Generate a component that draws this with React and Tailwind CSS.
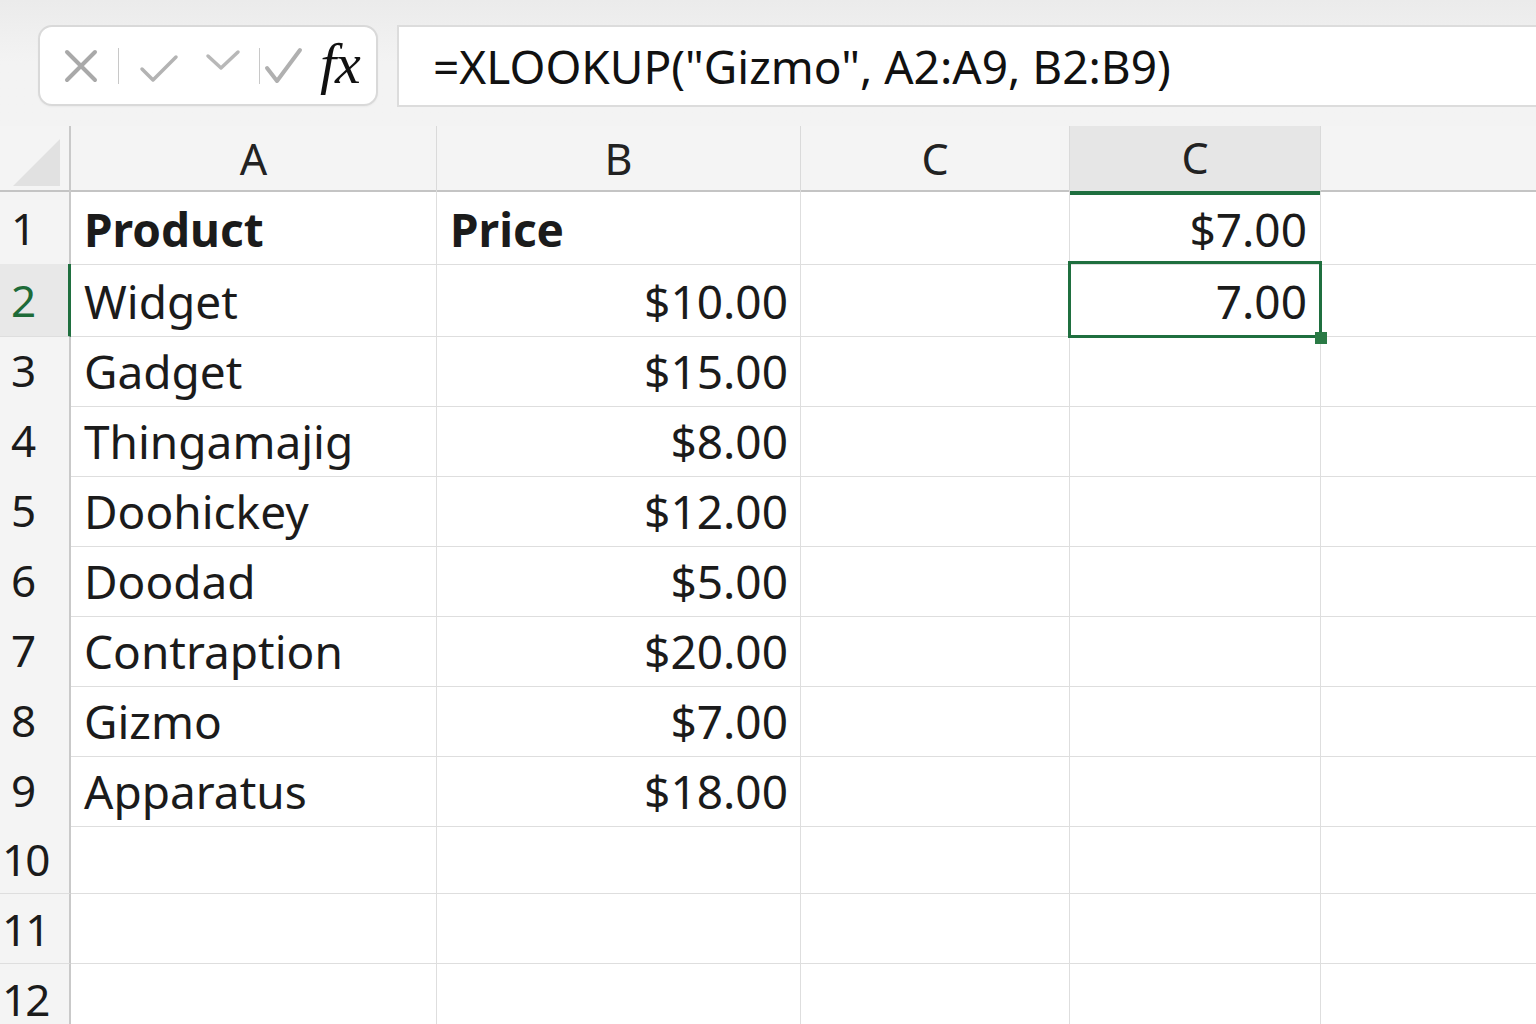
import React from 'react';

const rows = [
  { a: 'Product', b: 'Price', d: '$7.00', bold: true },
  { a: 'Widget', b: '$10.00', d: '7.00' },
  { a: 'Gadget', b: '$15.00' },
  { a: 'Thingamajig', b: '$8.00' },
  { a: 'Doohickey', b: '$12.00' },
  { a: 'Doodad', b: '$5.00' },
  { a: 'Contraption', b: '$20.00' },
  { a: 'Gizmo', b: '$7.00' },
  { a: 'Apparatus', b: '$18.00' },
  {},
  {},
  {},
];

const cols = 'grid grid-cols-[71px_366px_364px_269px_251px_1fr]';

const FormulaIcons = () => (
  <div className="w-[340px] h-[81px] rounded-[14px] border-2 border-[#d9d9d9] bg-white flex items-center pl-[24px] shadow-[0_1px_2px_rgba(0,0,0,0.04)]">
    <svg width="34" height="34" viewBox="0 0 34 34" className="text-[#a9a9a9]">
      <path d="M3 3 L31 31 M31 3 L3 31" stroke="currentColor" strokeWidth="4" strokeLinecap="round" />
    </svg>
    <div className="w-px h-[36px] bg-[#c8c8c8] ml-[20px]" />
    <svg width="40" height="32" viewBox="0 0 40 32" className="ml-[20px] mt-[4px] text-[#b3b3b3]">
      <path d="M3 17 L14 28 L37 5" stroke="currentColor" strokeWidth="3.5" fill="none" strokeLinecap="round" strokeLinejoin="round" />
    </svg>
    <svg width="36" height="26" viewBox="0 0 36 26" className="ml-[26px] mb-[10px] text-[#b8b8b8]">
      <path d="M3 8 L16 20 L33 4" stroke="currentColor" strokeWidth="3.5" fill="none" strokeLinecap="round" strokeLinejoin="round" />
    </svg>
    <div className="w-px h-[36px] bg-[#c8c8c8] ml-[18px]" />
    <svg width="40" height="40" viewBox="0 0 40 40" className="ml-[4px] text-[#b0b0b0]">
      <path d="M3 22 L13 35 L36 4" stroke="currentColor" strokeWidth="4" fill="none" strokeLinecap="round" strokeLinejoin="round" />
    </svg>
    <span className="ml-[16px] text-[58px] leading-none italic text-[#111] font-['Liberation_Serif',serif] -mt-[4px] tracking-[-1px]">fx</span>
  </div>
);

export default function App() {
  return (
    <div className="w-[1536px] h-[1024px] overflow-hidden bg-white font-['Noto_Sans',sans-serif] text-[#1b1b1b]">
      {/* formula bar */}
      <div className="h-[126px] bg-gradient-to-b from-[#ebebeb] via-[#f3f3f3] to-[#f3f3f3] flex pt-[25px] pl-[38px] gap-[19px]">
        <FormulaIcons />
        <div className="flex-1 h-[82px] bg-white border-2 border-r-0 border-[#dcdcdc] flex items-center pl-[34px]">
          <span className="text-[46px] leading-none text-[#111]">=XLOOKUP("Gizmo", A2:A9, B2:B9)</span>
        </div>
      </div>

      {/* column headers */}
      <div className={`${cols} h-[66px] bg-[#f4f4f4] border-b-2 border-[#c4c4c4]`}>
        <div className="border-r-2 border-[#c9c9c9] flex items-end justify-end pr-[9px] pb-[7px]">
          <div className="w-0 h-0 border-l-[47px] border-l-transparent border-b-[47px] border-b-[#e1e1e1]" />
        </div>
        {['A', 'B', 'C'].map((c) => (
          <div key={c} className="border-r border-[#dadada] flex items-center justify-center text-[43px] text-[#222]">{c}</div>
        ))}
        <div className="bg-[#e6e6e6] border-r border-[#dadada] border-b-[4px] border-b-[#1f6f3f] -mb-[2px] flex items-center justify-center text-[43px] text-[#222]">C</div>
        <div />
      </div>

      {/* rows */}
      {rows.map((r, i) => {
        const sel = i === 1;
        return (
          <div key={i} className={`${cols} ${i === 0 ? 'h-[72px]' : 'h-[70px]'} ${sel ? 'relative z-10' : ''}`}>
            <div className={`${sel ? 'bg-[#e8e8e8] text-[#1e6b38] border-r-[3px] border-r-[#1f6f3f]' : 'bg-[#f4f4f4] text-[#1b1b1b] border-r-2 border-r-[#c9c9c9]'} border-b border-b-[#dedede] flex items-center text-[44px] ${i >= 9 ? 'pl-[2px] tracking-[-2px]' : 'pl-[11px]'}`}>{i + 1}</div>
            <div className={`border-r border-b border-[#dedede] flex items-center pl-[13px] pt-[3px] text-[46px] ${r.bold ? 'font-bold' : ''}`}>{r.a}</div>
            <div className={`border-r border-b border-[#dedede] flex items-center pl-[13px] pr-[12px] pt-[3px] text-[46px] ${r.bold ? 'font-bold justify-start' : 'justify-end'}`}>{r.b}</div>
            <div className="border-r border-b border-[#dedede]" />
            <div className="relative border-r border-b border-[#dedede] flex items-center justify-end pr-[13px] pt-[3px] text-[46px]">
              {r.d}
              {sel && (
                <>
                  <div className="absolute -left-[2px] -top-[3px] -right-[2px] -bottom-[2px] border-[3px] border-[#1f6f3f]" />
                  <div className="absolute -right-[7px] -bottom-[8px] w-[12px] h-[12px] bg-[#2a7a45]" />
                </>
              )}
            </div>
            <div className="border-b border-[#dedede]" />
          </div>
        );
      })}
    </div>
  );
}
